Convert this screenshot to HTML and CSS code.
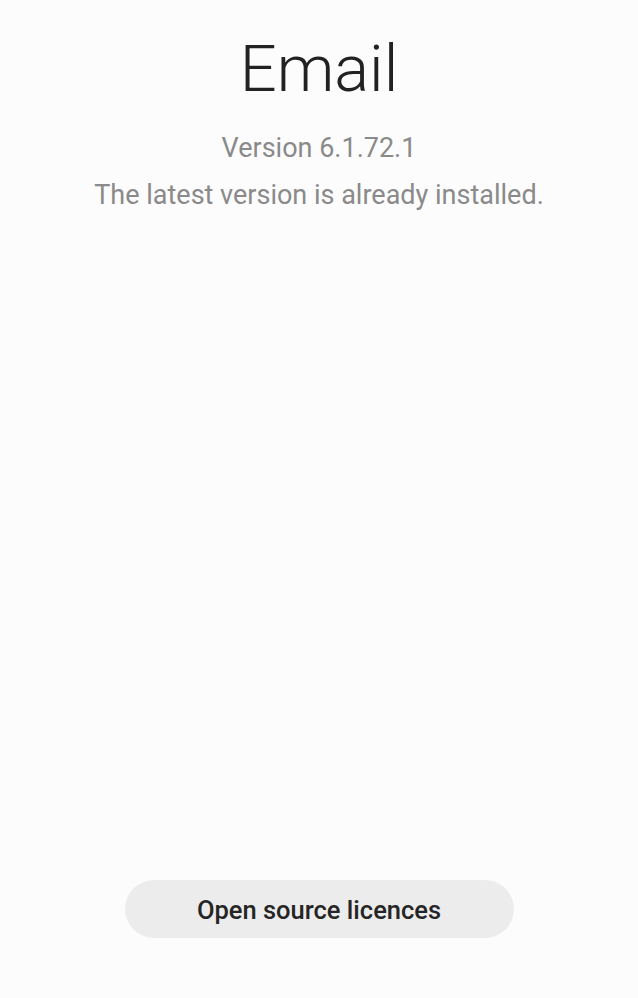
FILE: index.html
```html
<!DOCTYPE html>
<html lang="en">
<head>
    <meta charset="UTF-8">
    <meta name="viewport" content="width=device-width, initial-scale=1.0">
    <title>About Email</title>
    <link rel="stylesheet" href="styles.css">
</head>
<body>

<div class="page">

    <!-- app info -->
    <div class="app-info">
        <h1 class="app-name">Email</h1>
        <p class="version">Version 6.1.72.1</p>
        <p class="update-status">The latest version is already installed.</p>
    </div>

    <!-- bottom action -->
    <div class="actions">
        <button class="licence-btn">Open source licences</button>
    </div>

</div>

</body>
</html>
```

FILE: styles.css
```css
html, body {
    height: 100%;
}
body {
    font-family: 'Roboto', 'Liberation Sans', sans-serif;
    background-color: #fcfcfc;
    margin: 0;
    padding: 0;
    color: #222;
}
.page {
    height: 100%;
    display: flex;
    flex-direction: column;
    justify-content: space-between;
    box-sizing: border-box;
    padding: 27px 0 60px;
}
.app-info {
    text-align: center;
}
.app-name {
    font-size: 65px;
    font-weight: 300;
    color: #222;
    margin: 0;
    line-height: 84px;
}
.version,
.update-status {
    font-size: 27px;
    color: #8a8a8a;
    margin: 0;
    line-height: 47px;
}
.version {
    margin-top: 14px;
}
.actions {
    display: flex;
    justify-content: center;
}
.licence-btn {
    width: 389px;
    height: 58px;
    padding-top: 2px;
    border: none;
    border-radius: 29px;
    background-color: #ececec;
    color: #252525;
    font-family: inherit;
    font-size: 25.5px;
    font-weight: 500;
    cursor: pointer;
}
```
